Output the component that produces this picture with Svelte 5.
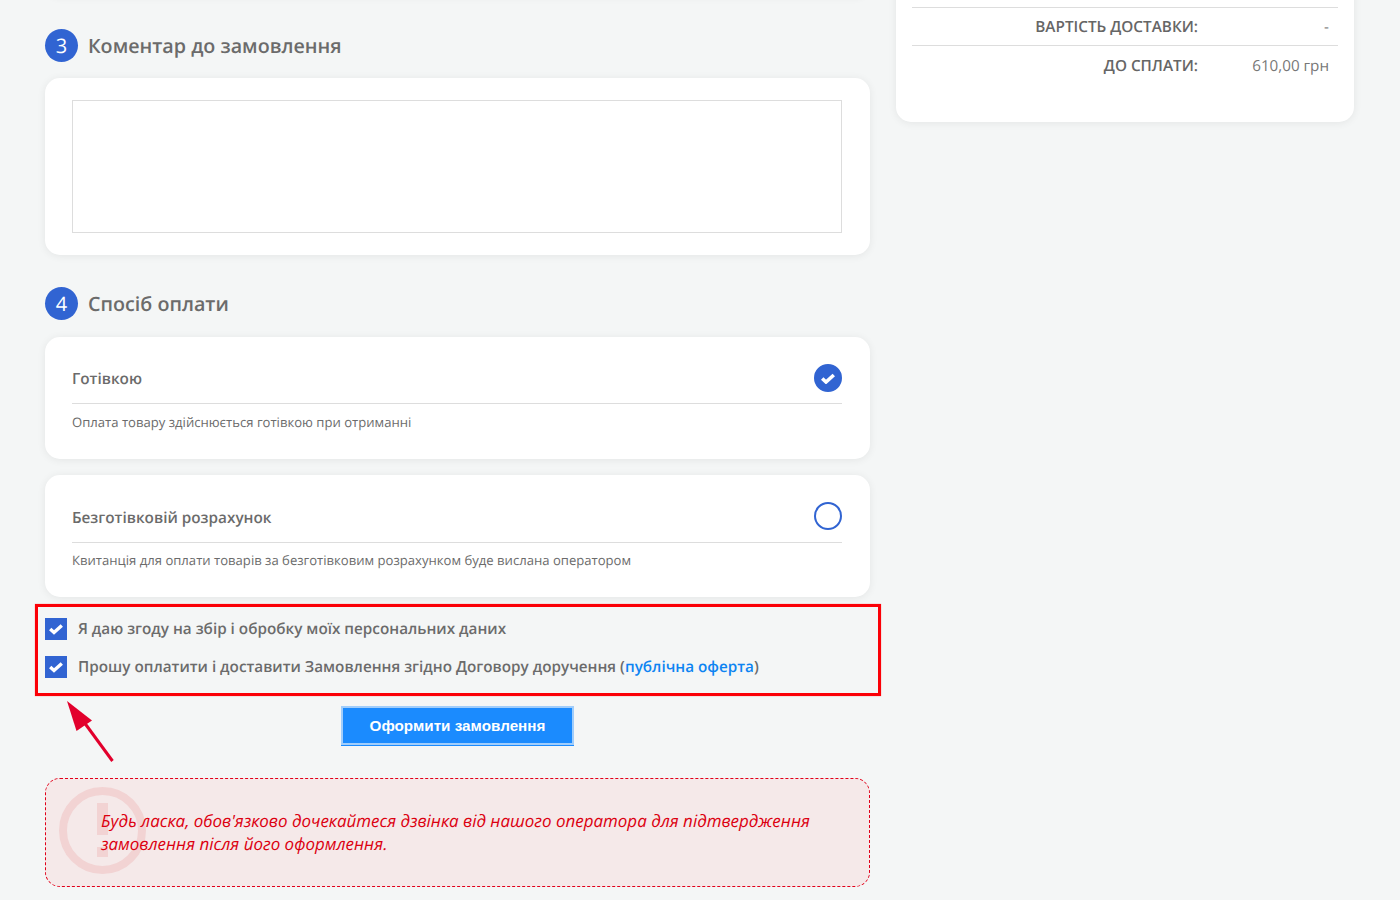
<script lang="ts">
	const methods = [
		{
			title: "Готівкою",
			text: "Оплата товару здійснюється готівкою при отриманні",
			checked: true,
		},
		{
			title: "Безготівковій розрахунок",
			text: "Квитанція для оплати товарів за безготівковим розрахунком буде вислана оператором",
			checked: false,
		},
	];
</script>

<div class="viewport">
	<div class="page">
		<div class="left">
			<div class="card prev"></div>

			<div class="heading first">
				<span class="step">3</span>
				<span class="heading-text">Коментар до замовлення</span>
			</div>
			<div class="card comment">
				<textarea class="comment-box"></textarea>
			</div>

			<div class="heading second">
				<span class="step">4</span>
				<span class="heading-text">Спосіб оплати</span>
			</div>
			{#each methods as method}
				<div class="card method">
					<div class="method-head">
						<span class="method-title">{method.title}</span>
						{#if method.checked}
							<span class="radio on">
								<svg width="14" height="11" viewBox="0 0 14 11">
									<path d="M1.2 5.500 5 9 12.800 2" fill="none" stroke="#fff" stroke-width="3.6" />
								</svg>
							</span>
						{:else}
							<span class="radio"></span>
						{/if}
					</div>
					<div class="method-text">{method.text}</div>
				</div>
			{/each}

			<div class="agreements">
				<div class="highlight"></div>
				<label class="agree">
					<span class="box">
						<svg width="14" height="11" viewBox="0 0 14 11">
							<path d="M1.2 5 5 8.500 12.800 1.500" fill="none" stroke="#fff" stroke-width="3.4" />
						</svg>
					</span>
					<span class="agree-text">Я даю згоду на збір і обробку моїх персональних даних</span>
				</label>
				<label class="agree">
					<span class="box">
						<svg width="14" height="11" viewBox="0 0 14 11">
							<path d="M1.2 5 5 8.500 12.800 1.500" fill="none" stroke="#fff" stroke-width="3.4" />
						</svg>
					</span>
					<span class="agree-text">Прошу оплатити і доставити Замовлення згідно Договору доручення (<span class="link">публічна оферта</span>)</span>
				</label>
				<svg class="arrow" width="50" height="64" viewBox="0 0 50 64">
					<path d="M45.500 60 14 17" fill="none" stroke="#e2002c" stroke-width="3" />
					<path d="M0 0 25 19.500 9.500 30Z" fill="#e2002c" />
				</svg>
			</div>

			<div class="submit-row">
				<button class="submit">Оформити замовлення</button>
			</div>

			<div class="notice">
				<svg class="notice-icon" width="88" height="88" viewBox="0 0 88 88">
					<circle cx="43.500" cy="44.500" r="39.500" fill="none" stroke="#f2d3d3" stroke-width="8" />
					<rect x="38" y="17" width="11" height="32" fill="#f2d3d3" />
					<rect x="38" y="61" width="11" height="10" fill="#f2d3d3" />
				</svg>
				<p class="notice-text">Будь ласка, обов'язково дочекайтеся дзвінка від нашого оператора для підтвердження замовлення після його оформлення.</p>
			</div>
		</div>

		<div class="right">
			<div class="card summary">
				<div class="summary-row">
					<span class="summary-label">ВАРТІСТЬ ДОСТАВКИ:</span>
					<span class="summary-value">-</span>
				</div>
				<div class="summary-row">
					<span class="summary-label">ДО СПЛАТИ:</span>
					<span class="summary-value">610,00 грн</span>
				</div>
			</div>
		</div>
	</div>
</div>

<style>
	:global(body) {
		margin: 0;
		background: #f4f6f6;
	}

	.viewport {
		height: 900px;
		overflow: hidden;
		font-family: "Open Sans", sans-serif;
		text-rendering: geometricPrecision;
		color: #666;
	}

	.page {
		display: flex;
		gap: 26px;
		align-items: flex-start;
		padding-left: 45px;
		margin-top: -40px;
	}

	.left {
		width: 825px;
		flex: none;
	}

	.right {
		width: 458px;
		flex: none;
	}

	.card {
		background: #fff;
		border-radius: 15px;
		box-shadow: 0 1px 8px rgba(0, 0, 0, 0.07);
		box-sizing: border-box;
	}

	.prev {
		height: 36px;
	}

	.heading {
		display: flex;
		align-items: center;
		gap: 10px;
		height: 33px;
	}

	.first {
		margin-top: 33px;
		margin-bottom: 16px;
	}

	.second {
		margin-top: 32px;
		margin-bottom: 17px;
	}

	.step {
		width: 33px;
		height: 33px;
		border-radius: 50%;
		background: #3164d2;
		color: #fff;
		font-size: 20px;
		line-height: 33px;
		text-align: center;
	}

	.heading-text {
		font-size: 19.7px;
		font-weight: 600;
		color: #6b6b6b;
	}

	.comment {
		height: 177px;
		padding: 22px 28px 22px 27px;
	}

	.comment-box {
		display: block;
		width: 100%;
		height: 133px;
		box-sizing: border-box;
		border: 1px solid #ddd;
		background: #fff;
		resize: none;
		outline: none;
	}

	.method {
		height: 122px;
		padding: 25px 28px 0 27px;
		margin-bottom: 16px;
	}

	.method-head {
		display: flex;
		justify-content: space-between;
		align-items: center;
		height: 32px;
		border-bottom: 1px solid #ddd;
		padding-bottom: 9px;
		box-sizing: content-box;
	}

	.method + .method .method-head {
		padding-bottom: 10px;
	}

	.method + .method .method-text {
		margin-top: 8px;
	}

	.method-title {
		font-size: 15.3px;
		font-weight: 600;
		color: #6b6b6b;
		padding-top: 1px;
	}

	.method + .method .method-title {
		padding-top: 3px;
	}

	.radio {
		width: 28px;
		height: 28px;
		border-radius: 50%;
		border: 2px solid #3164d2;
		box-sizing: border-box;
		display: flex;
		align-items: center;
		justify-content: center;
	}

	.on {
		background: #3164d2;
	}

	.method-text {
		font-size: 13.1px;
		color: #6b6b6b;
		margin-top: 9px;
		line-height: 18px;
	}

	.agreements {
		position: relative;
		margin-top: -16px;
		padding-top: 21px;
		display: flex;
		flex-direction: column;
		gap: 16px;
	}

	.highlight {
		position: absolute;
		left: -10px;
		top: 7px;
		width: 846px;
		height: 92px;
		box-sizing: border-box;
		border: 3px solid #fb0007;
		box-shadow: 0 0 1px rgba(251, 0, 7, 0.5);
	}

	.agree {
		display: flex;
		align-items: center;
		gap: 11px;
		height: 22px;
		font-size: 15.28px;
		font-weight: 600;
		color: #6b6b6b;
		line-height: 20px;
	}

	.agree-text {
		margin-top: -1px;
	}

	.box {
		width: 22px;
		height: 22px;
		flex: none;
		background: #3164d2;
		display: flex;
		align-items: center;
		justify-content: center;
	}

	.link {
		color: #0d84f2;
	}

	.arrow {
		position: absolute;
		left: 22px;
		top: 104px;
	}

	.submit-row {
		display: flex;
		justify-content: center;
		margin-top: 28px;
	}

	.submit {
		width: 233px;
		height: 39px;
		box-sizing: border-box;
		background: #1b8bfe;
		border: 2px solid #a0cdfb;
		box-shadow: 0 1px 0 #1b8bfe;
		color: #fff;
		font-family: "Liberation Sans", sans-serif;
		font-size: 15.25px;
		font-weight: 700;
		padding: 0;
	}

	.notice {
		position: relative;
		margin-top: 33px;
		height: 109px;
		box-sizing: border-box;
		border: 1px dashed #e2001a;
		border-radius: 15px;
		background: #f5e9e9;
		padding: 30px 55px 0;
	}

	.notice-icon {
		position: absolute;
		left: 13px;
		top: 7px;
	}

	.notice-text {
		position: relative;
		margin: 0;
		font-size: 16.95px;
		font-style: italic;
		font-weight: 400;
		line-height: 23px;
		color: #dc0010;
	}

	.summary {
		height: 162px;
		padding: 47px 16px 0;
		display: flex;
		flex-direction: column;
	}

	.summary-row {
		display: flex;
		justify-content: flex-end;
		align-items: center;
		height: 37px;
		border-top: 1px solid #ddd;
		padding-right: 9px;
	}

	.summary-row + .summary-row {
		height: 39px;
	}

	.summary-label {
		font-size: 15.3px;
		font-weight: 600;
	}

	.summary-value {
		width: 131px;
		text-align: right;
		font-size: 15.2px;
		color: #777;
	}
</style>
